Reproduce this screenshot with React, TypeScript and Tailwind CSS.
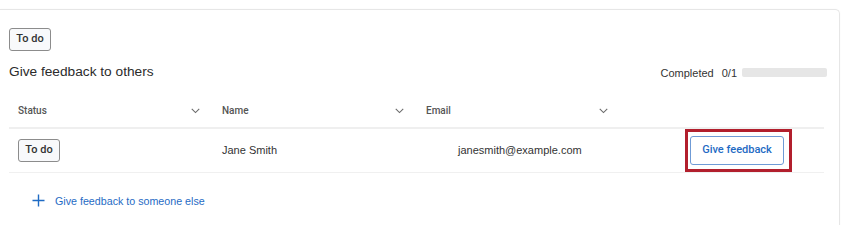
import React from 'react';

const FONT = "font-['Liberation_Sans',Arial,sans-serif]";
const MEDIUM = "font-['Roboto','Liberation_Sans',sans-serif] font-medium";

function Chevron() {
  return (
    <svg width="9" height="6" viewBox="0 0 9 6" fill="none" className="shrink-0">
      <path d="M0.75 0.9 L4.5 4.6 L8.25 0.9" stroke="#6b6b6b" strokeWidth="1.1" />
    </svg>
  );
}

function StatusBadge({ className = '' }: { className?: string }) {
  return (
    <span
      className={`inline-flex items-center justify-center h-[23px] w-[42px] rounded-[3px] border border-[#8c8c8c] bg-[#f8f9fb] text-[11px] text-[#333] ${MEDIUM} ${className}`}
    >
      To do
    </span>
  );
}

const COLUMNS = ['Status', 'Name', 'Email'];

export default function App() {
  return (
    <div className={`w-[850px] h-[225px] bg-white overflow-hidden pt-[9px] ${FONT}`}>
      <div className="w-[840px] h-[230px] border-t border-r border-[#e6e6e6] rounded-tr-[5px] shadow-[0_0_2px_rgba(0,0,0,0.04)] pl-[9px] pr-[15px] pt-[15px]">
        <StatusBadge className="h-[22px] w-[41px]" />

        <div className="mt-[12px] flex items-center justify-between h-[20px]">
          <h2 className="text-[13.7px] text-[#2b2b2b]">Give feedback to others</h2>
          <div className="flex items-center -mr-[3px]">
            <span className="text-[11px] text-[#333]">Completed</span>
            <span className="ml-[8px] text-[11px] text-[#333]">0/1</span>
            <div className="ml-[5px] w-[85px] h-[9px] rounded-[2px] bg-[#e6e6e6]" />
          </div>
        </div>

        <div className="mt-[12px] w-[815px]">
          <div className="grid grid-cols-[204px_204px_204px_203px] h-[34px] border-b-2 border-[#efefef]">
            {COLUMNS.map((c) => (
              <div key={c} className="flex items-center justify-between pl-[9px] pr-[13px]">
                <span className={`text-[10px] text-[#555] ${MEDIUM}`}>{c}</span>
                <Chevron />
              </div>
            ))}
            <div />
          </div>

          <div className="grid grid-cols-[204px_204px_204px_203px] h-[44px] border-b border-[#f0f0f0] items-center">
            <div className="pl-[9px] flex items-center">
              <StatusBadge />
            </div>
            <div className="pl-[9px] text-[11px] text-[#333]">Jane Smith</div>
            <div className="pl-[41px] text-[11px] text-[#333]">janesmith@example.com</div>
            <div className="pl-[64px] flex items-center">
              <div className="border-[3px] border-[#b21f2d] pl-[2px] pr-[5px] py-[4px]">
                <button className={`h-[29px] w-[94px] rounded-[3px] border border-[#6f9bd6] bg-white text-[11px] text-[#1f6bc4] ${MEDIUM}`}>
                  Give feedback
                </button>
              </div>
            </div>
          </div>

          <button className="mt-[20px] ml-[23px] flex items-center text-[#1f6bc4]">
            <svg width="13" height="13" viewBox="0 0 13 13" fill="none">
              <path d="M6.5 0.5 V12.5 M0.5 6.5 H12.5" stroke="#1f6bc4" strokeWidth="1.4" />
            </svg>
            <span className="ml-[10px] text-[10.7px]">Give feedback to someone else</span>
          </button>
        </div>
      </div>
    </div>
  );
}
